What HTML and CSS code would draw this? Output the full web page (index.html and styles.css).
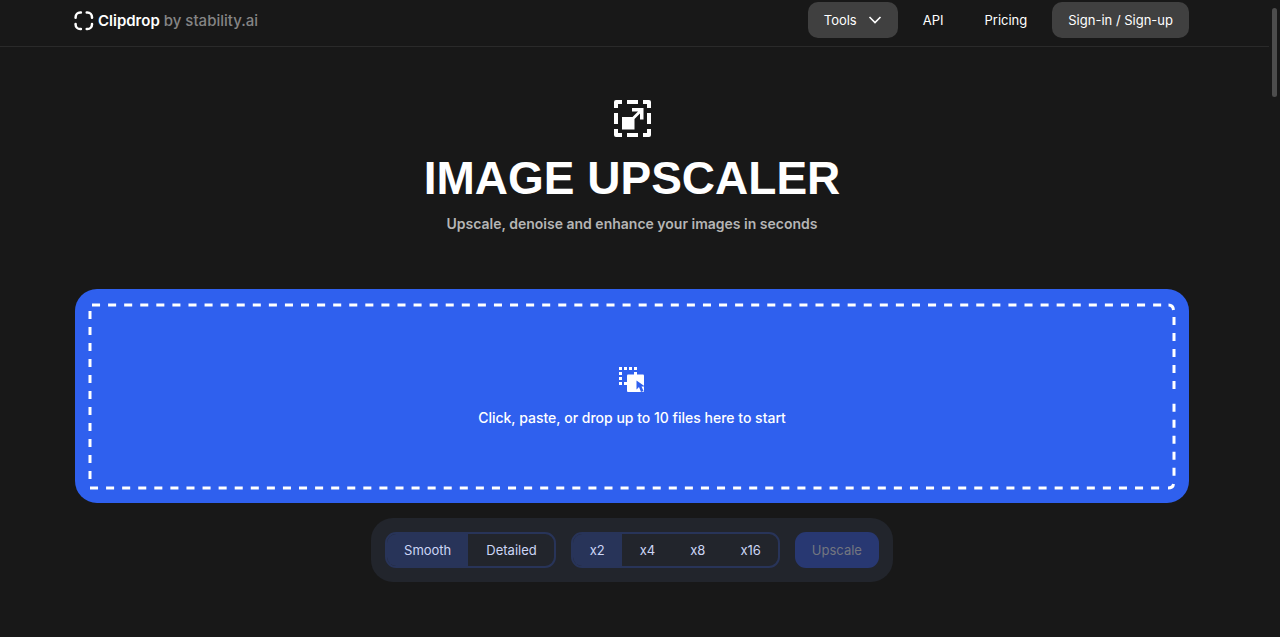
FILE: index.html
```
<!DOCTYPE html>
<html lang="en">
<head>
<meta charset="utf-8">
<meta name="viewport" content="width=device-width, initial-scale=1">
<title>Image Upscaler - Clipdrop</title>
<link rel="stylesheet" href="styles.css">
</head>
<body>
<header class="header">
  <div class="header-inner">
    <a class="brand" href="#">
      <svg class="brand-mark" viewBox="0 0 20 20" aria-hidden="true"><path d="M1.600 6.700V6.200A4.600 4.600 0 0 1 6.200 1.600H6.900M12.700 1.600h.7a4.600 4.600 0 0 1 4.600 4.600V6.700M18 12.900v.5a4.600 4.600 0 0 1-4.600 4.600H12.700M6.900 18H6.200a4.600 4.600 0 0 1-4.600-4.600V12.900"/></svg>
      <span class="brand-name">Clipdrop</span>
      <span class="brand-by">by stability.ai</span>
    </a>
    <nav class="nav">
      <button class="nav-item nav-filled" type="button">Tools
        <svg class="chevron" viewBox="0 0 14 8" aria-hidden="true"><path d="M1.500 1 7 6.500l5.500-5.500"/></svg>
      </button>
      <a class="nav-item" href="#">API</a>
      <a class="nav-item" href="#">Pricing</a>
      <a class="nav-item nav-filled" href="#">Sign-in / Sign-up</a>
    </nav>
  </div>
</header>
<main class="main">
  <section class="hero">
    <svg class="hero-icon" viewBox="0 0 37 37" aria-hidden="true">
      <path d="M2 0H8V4H4V8H0V2Q0 0 2 0zM13 0H24V4H13zM29 0h6q2 0 2 2V8H33V4H29zM0 13H4V24H0zM33 13h4V24H33zM0 29H4v4H8v4H2q-2 0-2-2zM13 33H24v4H13zM33 29h4v6q0 2-2 2H29V33h4z"/>
      <path d="M8 17H18.500L24 11.500H18V8H29.500V19.500H26V13.500L20.500 19V29.500H8z"/>
    </svg>
    <h1 class="title">IMAGE UPSCALER</h1>
    <p class="subtitle">Upscale, denoise and enhance your images in seconds</p>
  </section>
  <button class="dropzone" type="button">
    <svg class="dashes" aria-hidden="true">
      <line x1="0" y1="0" x2="99%" y2="0" pathLength="1068" stroke-dashoffset="-2"/>
      <line x1="0" y1="0" x2="0" y2="97%" stroke-dashoffset="-6"/>
      <line x1="0" y1="100%" x2="99%" y2="100%" pathLength="1068"/>
      <line x1="100%" y1="6%" x2="100%" y2="50%" stroke-dashoffset="-1"/>
      <line x1="100%" y1="54%" x2="100%" y2="97%"/>
      <svg class="corner" x="100%" y="0"><path d="M-5.500 0Q-1 0-.5 5"/></svg>
      <svg class="corner" x="100%" y="100%"><path d="M-6 0Q-1 0-.5-4"/></svg>
    </svg>
    <svg class="drop-icon" viewBox="0 0 26 26" aria-hidden="true">
      <path d="M0 0h3v3H0zM5 0h3v3H5zM10 0h3v3h-3zM15 0h3v3h-3zM0 5h3v3H0zM0 10h3v3H0zM0 15h3v3H0zM5 15h3v3H5zM15 5h3v3h-3z"/>
      <rect x="8" y="7.500" width="17" height="17.500" rx="1"/>
      <path class="pointer" d="M17.500 13.500v9l2.500-2.500 2 5 2.500-1-2-4.500H26z"/>
    </svg>
    <span>Click, paste, or drop up to 10 files here to start</span>
  </button>
  <form class="controls">
    <div class="segments" role="radiogroup" aria-label="Mode">
      <label class="segment"><input type="radio" name="mode" checked><span>Smooth</span></label>
      <label class="segment"><input type="radio" name="mode"><span>Detailed</span></label>
    </div>
    <div class="segments" role="radiogroup" aria-label="Scale">
      <label class="segment"><input type="radio" name="scale" checked><span>x2</span></label>
      <label class="segment"><input type="radio" name="scale"><span>x4</span></label>
      <label class="segment"><input type="radio" name="scale"><span>x8</span></label>
      <label class="segment"><input type="radio" name="scale"><span>x16</span></label>
    </div>
    <button class="submit" type="submit" disabled>Upscale</button>
  </form>
</main>
<div class="scroll-thumb" aria-hidden="true"></div>
</body>
</html>
```
FILE: styles.css
```
* {
  box-sizing: border-box;
}

body {
  margin: 0;
  background: #181818;
  color: #fff;
  font-family: Inter, "Liberation Sans", sans-serif;
  font-size: 13px;
  line-height: 20px;
}

button {
  border: 0;
  color: inherit;
  font: inherit;
}

a {
  color: inherit;
  text-decoration: none;
}

.header {
  margin-right: 11px;
  padding: 2px 80px 8px 74px;
  border-bottom: 1px solid #2a2a2a;
}

.header-inner {
  display: flex;
  align-items: center;
  justify-content: space-between;
}

.brand {
  display: flex;
  align-items: center;
  gap: 4px;
  padding-top: 2px;
  font-size: 15px;
}

.brand-mark {
  width: 20px;
  height: 20px;
  fill: none;
  stroke: #fff;
  stroke-width: 2.5;
  stroke-linecap: round;
}

.brand-name {
  font-weight: 600;
}

.brand-by {
  color: #858585;
  font-weight: 500;
}

.nav {
  display: flex;
  gap: 9px;
}

.nav-item {
  display: flex;
  align-items: center;
  gap: 11px;
  height: 36px;
  padding: 0 16px;
  border-radius: 10px;
}

.nav-filled {
  background: #404040;
}

.chevron {
  width: 14px;
  height: 8px;
  fill: none;
  stroke: #fff;
  stroke-width: 1.6;
}

.main {
  display: flex;
  flex-direction: column;
  align-items: center;
  padding: 53px 91px 54px 75px;
}

.hero {
  display: flex;
  flex-direction: column;
  align-items: center;
}

.hero-icon {
  width: 37px;
  height: 37px;
  fill: #fff;
}

.title {
  margin: 12px 0 7px;
  font-family: "Liberation Sans", Arial, sans-serif;
  font-size: 46px;
  font-weight: 700;
  line-height: 58px;
}

.subtitle {
  margin: 0;
  color: #b5b5b5;
  font-size: 14px;
  font-weight: 600;
}

.dropzone {
  position: relative;
  display: flex;
  flex-direction: column;
  align-items: center;
  gap: 15px;
  width: 100%;
  margin-top: 55px;
  padding: 78px 16px 75px;
  border-radius: 22px;
  background: #2f60ee;
  font-size: 14px;
  font-weight: 500;
}

.dashes {
  position: absolute;
  top: 16px;
  left: 15px;
  width: calc(100% - 30px);
  height: calc(100% - 31px);
  overflow: visible;
  fill: none;
  stroke: #fff;
  stroke-width: 3;
}

.dashes line {
  stroke-dasharray: 8 8;
}

.corner {
  overflow: visible;
}

.drop-icon {
  width: 26px;
  height: 26px;
  fill: #fff;
}

.pointer {
  fill: #2f60ee;
}

.controls {
  display: flex;
  gap: 15px;
  margin: 15px 0 0;
  padding: 14px;
  border-radius: 22px;
  background: #22252c;
}

.segments {
  display: flex;
  gap: 1px;
  height: 36px;
  overflow: hidden;
  border: 2px solid #283459;
  border-radius: 11px;
  color: #ccd6f6;
}

.segment {
  position: relative;
  display: flex;
}

.segment input {
  position: absolute;
  inset: 0;
  margin: 0;
  opacity: 0;
}

.segment span {
  display: flex;
  align-items: center;
  padding: 0 17px;
}

.segment input:checked + span {
  background: #283459;
}

.submit {
  padding: 0 17px;
  border-radius: 11px;
  background: #283872;
  color: #737680;
}

.scroll-thumb {
  position: absolute;
  top: 8px;
  right: 3px;
  width: 5px;
  height: 89px;
  border-radius: 3px;
  background: #4d4d4d;
}
```
